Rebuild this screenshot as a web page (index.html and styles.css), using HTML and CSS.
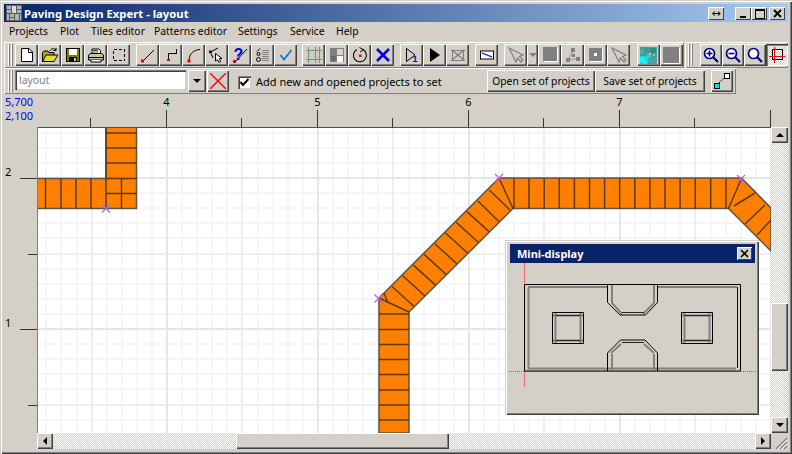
FILE: index.html
```html
<!DOCTYPE html>
<html lang="en">
<head>
<meta charset="utf-8">
<title>Paving Design Expert - layout</title>
<link rel="stylesheet" href="styles.css">
</head>
<body>
<div class="window">
  <header class="titlebar">
    <svg class="app-icon" width="16" height="16" viewBox="0 0 16 16" shape-rendering="crispEdges"><rect width="16" height="16" fill="#b4b4b4"/><path d="M.5 0V16M15.500 0V16M0 .5H16M0 15.500H16" stroke="#666" fill="none"/><path d="M5.500 0V8M10.500 0V8M0 8.500H16M0 4.500H5M11 4.500H16M8.500 8V16M3 8V16M13 8V16M3 12.500H8" stroke="#5a5a5a" fill="none"/><path d="M6 1H10V8H6Z" fill="#dcdcdc"/></svg>
    <span class="title-text">Paving Design Expert - layout</span>
    <span class="cap-btn cap-resize">↔</span>
    <span class="cap-btn cap-min"><svg width="15" height="13" viewBox="0 0 15 13" shape-rendering="crispEdges"><rect x="4" y="9" width="6" height="2"/></svg></span>
    <span class="cap-btn cap-max"><svg width="15" height="13" viewBox="0 0 15 13" shape-rendering="crispEdges"><path d="M3 2H12V11H3ZM3 3H12" fill="none" stroke="#000"/></svg></span>
    <span class="cap-btn cap-close"><svg width="15" height="13" viewBox="0 0 15 13"><path d="M4 3L11 10M11 3L4 10" stroke="#000" stroke-width="1.8"/></svg></span>
  </header>

  <nav class="menu">
    <span class="m1">Projects</span><span class="m2">Plot</span><span class="m3">Tiles editor</span><span class="m4">Patterns editor</span><span class="m5">Settings</span><span class="m6">Service</span><span>Help</span>
  </nav>

  <div class="toolrow">
    <div class="band band-main">
      <i class="grip"></i>
      <div class="group">
        <span class="tb"><svg viewBox="0 0 16 16"><path d="M2.500 1.500H10L13.500 5V14.500H2.500Z" fill="#fff" stroke="#000"/><path d="M9.500 1.500V5.500H13.500" fill="none" stroke="#000"/></svg></span>
        <span class="tb"><svg viewBox="0 0 16 16"><path d="M.5 14.500V5.500L2 4H6L7 5.500H12V14.500Z" fill="#a8a818" stroke="#000"/><path d="M.5 14.500L4 8H16L12 14.500Z" fill="#e0d840" stroke="#000"/><path d="M8 4C9 1.500 12 1 14 3M14 1V3.500H11.500" fill="none" stroke="#000"/></svg></span>
        <span class="tb"><svg viewBox="0 0 16 16" shape-rendering="crispEdges"><path d="M1.500 1.500H14.500V14.500H1.500Z" fill="#808000" stroke="#000"/><rect x="4" y="2" width="8" height="6" fill="#fff"/><rect x="4" y="10" width="8" height="4" fill="#000"/><rect x="9" y="11" width="2" height="3" fill="#c8c8c8"/></svg></span>
        <span class="tb"><svg viewBox="0 0 16 16"><path d="M4 7V2H11L12.500 3.500V7" fill="#fff" stroke="#000"/><path d="M.5 8L2.500 6.500H13.500L15.500 8V13H.5Z" fill="#c0c0c0" stroke="#000"/><path d="M1 10.500H15" stroke="#000"/><path d="M9 8.500H13" stroke="#e6d800" stroke-width="2"/><path d="M3 13V15H13V13" fill="#fff" stroke="#000"/><path d="M5 3.500H10M5 5H10" stroke="#555"/></svg></span>
        <span class="tb"><svg viewBox="0 0 16 16" shape-rendering="crispEdges"><path d="M2.500 2.500H13.500V13.500H2.500Z" fill="none" stroke="#000" stroke-dasharray="3 2"/></svg></span>
      </div>
      <div class="group g2">
        <span class="tb"><svg viewBox="0 0 16 16"><path d="M3 14L14 3" stroke="#000"/><rect x="1" y="12.500" width="3" height="3" fill="#e00"/></svg></span>
        <span class="tb"><svg viewBox="0 0 16 16" shape-rendering="crispEdges"><path d="M5.500 13V6.500H13.500V2" fill="none" stroke="#000"/><rect x="4" y="12" width="3" height="2" fill="#e00"/></svg></span>
        <span class="tb"><svg viewBox="0 0 16 16"><path d="M3 14C3 7 7 3 14 2.500" fill="none" stroke="#000"/><rect x="1.500" y="12.500" width="3" height="3" fill="#e00"/></svg></span>
        <span class="tb"><svg viewBox="0 0 16 16"><path d="M1.500 5L9 1M1.500 5L4 11" fill="none" stroke="#000"/><rect x="0" y="3.500" width="2.500" height="2.500"/><path d="M6.500 6.500V14L8.500 12.500L10 15.500L11.500 14.500L10.500 11.500H13Z" fill="#fff" stroke="#000"/></svg></span>
        <span class="tb"><svg viewBox="0 0 16 16"><path d="M3 15L15 2" stroke="#000"/><rect x="1" y="13" width="3" height="3" fill="#e00"/><text x="6.500" y="12.500" class="qm">?</text></svg></span>
        <span class="tb"><svg viewBox="0 0 16 16" fill="none" stroke="#000"><circle cx="3.500" cy="12.500" r="2"/><circle cx="3.500" cy="7" r="1.500"/><path d="M2 4.500L5 1.500"/><path d="M7 3.500H14M7 5.500H14M7 7.500H14M7 9.500H14M7 11.500H14M7 13.500H14" stroke="#808080" shape-rendering="crispEdges"/></svg></span>
        <span class="tb"><svg viewBox="0 0 16 16"><path d="M2.500 8L6 12.500L13.500 3" fill="none" stroke="#0a78d8" stroke-width="1.700"/></svg></span>
      </div>
      <div class="group g3">
        <span class="tb"><svg viewBox="0 0 16 16" shape-rendering="crispEdges" fill="none"><path d="M0 6.500H16M0 9.500H16M4.500 0V16M7.500 0V16M11.500 0V16" stroke="#b8d0b8"/><path d="M0 3.500H16M0 12.500H16M2.500 0V16M9.500 0V16M13.500 0V16" stroke="#7e8a7e"/></svg></span>
        <span class="tb"><svg viewBox="0 0 16 16" shape-rendering="crispEdges"><rect x="1" y="1" width="14" height="14" fill="#808080"/><rect x="8" y="2" width="6" height="6" fill="#d8d4cc"/><rect x="8" y="9" width="6" height="6" fill="#fff"/><rect x="2" y="9" width="5" height="5" fill="#6a6a6a"/></svg></span>
        <span class="tb"><svg viewBox="0 0 16 16"><path d="M11 2.600A6.500 6.500 0 1 1 5 2.500" fill="none" stroke="#000" stroke-width="1.100"/><path d="M7.500 .5L11.500 2.700L8 5" fill="none" stroke="#000"/><rect x="7" y="7.500" width="2.500" height="2.500" fill="#e00"/></svg></span>
        <span class="tb"><svg viewBox="0 0 16 16"><path d="M2 2L14 14M14 2L2 14" stroke="#0000e0" stroke-width="2.600"/></svg></span>
      </div>
      <div class="group g4">
        <span class="tb"><svg viewBox="0 0 16 16"><path d="M2.500 1.500V14.500L11 8Z" fill="none" stroke="#000"/><text x="11" y="15" class="one">1</text></svg></span>
        <span class="tb"><svg viewBox="0 0 16 16"><path d="M3 1V15L13 8Z"/></svg></span>
        <span class="tb"><svg viewBox="0 0 16 16" fill="none" stroke="#808080" shape-rendering="crispEdges"><path d="M1 3H15M1 13H15M2.500 3V13M13.500 3V13"/><path d="M2 3L14 13M14 3L2 13" stroke-width="1.500" shape-rendering="auto"/></svg></span>
      </div>
      <div class="group g4">
        <span class="tb"><svg viewBox="0 0 16 16"><rect x="1.500" y="4" width="13" height="8" fill="#fff" stroke="#000"/><path d="M3 6L13 10" stroke="#0000d0" stroke-width="1.200"/></svg></span>
      </div>
      <div class="group g4">
        <span class="tb"><svg viewBox="0 0 16 16"><path d="M1 1L8 15L9.500 11L13 15L15 13L11.500 9.500L15 8Z" fill="none" stroke="#808080" stroke-width="1.200"/></svg></span>
        <span class="tb tb-drop"><i class="tri-down tri-gray"></i></span>
        <span class="tb"><svg viewBox="0 0 16 16" shape-rendering="crispEdges"><rect x="2" y="1" width="14" height="14" fill="#fff"/><rect x="1" y="0" width="14" height="14" fill="#808080"/></svg></span>
        <span class="tb"><svg viewBox="0 0 16 16"><path d="M3 13L8 4M4 13L14 11" stroke="#999" stroke-width="1.100"/><rect x="6" y="1" width="4" height="4" fill="#808080"/><rect x="1" y="11" width="4" height="4" fill="#808080"/><rect x="11" y="10" width="4" height="4" fill="#808080"/><rect x="7" y="7" width="3" height="3" fill="#808080"/></svg></span>
        <span class="tb"><svg viewBox="0 0 16 16" shape-rendering="crispEdges"><rect x="2" y="2" width="13" height="13" fill="#fff"/><rect x="1" y="1" width="13" height="13" fill="#808080"/><rect x="6" y="6" width="3" height="3" fill="#fff"/></svg></span>
        <span class="tb"><svg viewBox="0 0 16 16"><path d="M1 1L8 15L9.500 11L13 15L15 13L11.500 9.500L15 8Z" fill="none" stroke="#808080" stroke-width="1.200"/></svg></span>
      </div>
      <div class="group g5">
        <span class="tb"><svg class="big" viewBox="0 0 17 17" shape-rendering="crispEdges"><rect width="17" height="17" fill="#35a5a0"/><rect y="9" width="8" height="8" fill="#1cd8e0"/><rect x="0" y="11" width="5" height="4" fill="#00ffff"/><rect x="10" y="1" width="6" height="5" fill="#2a8f88"/><rect x="7" y="7" width="4" height="4" fill="#7fb0a8"/><rect x="4" y="0" width="4" height="5" fill="#4d8f90"/><rect x="11" y="10" width="6" height="7" fill="#5a9ca0"/><rect x="8" y="12" width="3" height="3" fill="#20c0c0"/><rect x="9" y="6" width="2" height="1" fill="#e8f0f0"/><rect x="1" y="3" width="2" height="3" fill="#5fb8a8"/><rect x="13" y="7" width="2" height="2" fill="#80c0b8"/><rect x="4" y="14" width="2" height="2" fill="#70e0e8"/></svg></span>
        <span class="tb"><svg class="big" viewBox="0 0 17 17" shape-rendering="crispEdges"><rect x="1" y="1" width="16" height="16" fill="#fff"/><rect width="16" height="16" fill="#808080"/></svg></span>
      </div>
    </div>
    <div class="band band-zoom">
      <i class="grip"></i>
      <div class="group">
        <span class="tb tz"><svg viewBox="0 0 16 16"><circle cx="6.500" cy="6.500" r="5" fill="#fff" stroke="#000080" stroke-width="1.700"/><path d="M10.500 10.500L15 15" stroke="#000080" stroke-width="2.200"/><path d="M3.500 6.500H9.500M6.500 3.500V9.500" stroke="#000080" stroke-width="1.600"/></svg></span>
        <span class="tb tz"><svg viewBox="0 0 16 16"><circle cx="6.500" cy="6.500" r="5" fill="#fff" stroke="#000080" stroke-width="1.700"/><path d="M10.500 10.500L15 15" stroke="#000080" stroke-width="2.200"/><path d="M3.500 6.500H9.500" stroke="#000080" stroke-width="1.600"/></svg></span>
        <span class="tb tz"><svg viewBox="0 0 16 16"><circle cx="6.500" cy="6.500" r="5" fill="#fff" stroke="#000080" stroke-width="1.700"/><path d="M10.500 10.500L15 15" stroke="#000080" stroke-width="2.200"/></svg></span>
        <span class="tb tz tb-on"><svg viewBox="0 0 16 16" shape-rendering="crispEdges"><rect x="3.500" y="2.500" width="10" height="10" fill="none" stroke="#000"/><path d="M0 9.500H16M5.500 0V16" stroke="#f00" fill="none"/></svg></span>
      </div>
    </div>
  </div>

  <div class="band band-set">
    <i class="grip"></i>
    <span class="combo">layout</span>
    <span class="tb combo-btn"><i class="tri-down"></i></span>
    <span class="tb clear-btn"><svg viewBox="0 0 16 16"><path d="M0 0L16 16M16 0L0 16" stroke="#f00" stroke-width="1.400"/></svg></span>
    <span class="check"><svg width="11" height="11" viewBox="0 0 11 11"><path d="M1.500 5L4 8L9.500 2" fill="none" stroke="#000" stroke-width="2"/></svg></span>
    <span class="check-label">Add new and opened projects to set</span>
    <span class="tb text-btn btn-open">Open set of projects</span>
    <span class="tb text-btn btn-save">Save set of projects</span>
    <span class="tb set-icon"><svg viewBox="0 0 16 16" shape-rendering="crispEdges"><path d="M5 10L10 5" stroke="#000" stroke-dasharray="2 1" shape-rendering="auto"/><rect x="10.500" y=".5" width="5" height="5" fill="#fff" stroke="#000"/><rect x=".5" y="10.500" width="5" height="5" fill="#00e0f0" stroke="#000"/></svg></span>
  </div>

  <main class="workspace">
    <div class="coords"><span>5,700</span><span>2,100</span></div>

    <svg class="ruler-top" width="734" height="33" viewBox="37 94 734 33" shape-rendering="crispEdges">
      <path d="M90.500 118V127M241.500 118V127M392.500 118V127M543.500 118V127M694.500 118V127M166.500 110V127M317.500 110V127M468.500 110V127M619.500 110V127M770.500 110V127" stroke="#333" fill="none"/>
      <g class="rtext"><text x="166.500" y="106">4</text><text x="317.500" y="106">5</text><text x="468.500" y="106">6</text><text x="619.500" y="106">7</text></g>
    </svg>
    <div class="corner-pad"></div>

    <svg class="ruler-left" width="33" height="306" viewBox="4 127 33 306" shape-rendering="crispEdges">
      <path d="M20 178.500H37M20 329.500H37M28 254.500H37M28 405.500H37" stroke="#333" fill="none"/>
      <g class="ltext"><text x="5" y="176">2</text><text x="5" y="327">1</text></g>
    </svg>

    <div class="canvas">
      <svg class="plan" width="734" height="306" viewBox="37 127 734 306">
        <rect x="37" y="127" width="734" height="306" fill="#fff"/>
        <g shape-rendering="crispEdges" fill="none" stroke-width="2" transform="translate(1 0)">
          <path stroke="#f6f6f6" d="M45 127V433M60 127V433M76 127V433M106 127V433M121 127V433M136 127V433M151 127V433M181 127V433M196 127V433M211 127V433M226 127V433M257 127V433M272 127V433M287 127V433M302 127V433M332 127V433M347 127V433M362 127V433M377 127V433M408 127V433M423 127V433M438 127V433M453 127V433M483 127V433M498 127V433M513 127V433M528 127V433M559 127V433M574 127V433M589 127V433M604 127V433M634 127V433M649 127V433M664 127V433M679 127V433M710 127V433M725 127V433M740 127V433M755 127V433"/>
          <path stroke="#f6f6f6" d="M36 133H771M36 148H771M36 163H771M36 193H771M36 208H771M36 223H771M36 238H771M36 269H771M36 284H771M36 299H771M36 314H771M36 344H771M36 359H771M36 374H771M36 389H771M36 420H771"/>
          <path stroke="#eeeeee" d="M91 127V433M241 127V433M392 127V433M543 127V433M694 127V433M36 254H771M36 405H771"/>
          <path stroke="#e6e6e6" d="M166 127V433M317 127V433M468 127V433M619 127V433M770 127V433M36 178H771M36 329H771"/>
        </g>

        <g class="paving">
          <path d="M37 178.500H106V127H136.500V208.500H37Z"/>
          <path class="tick" d="M45.500 178.500V208.500M61 178.500V208.500M76 178.500V208.500M91 178.500V208.500M106 127V208.500M121.500 178.500V208.500M106 133H136.500M106 148H136.500M106 163H136.500M106 178.500H136.500M106 193.500H136.500"/>
          <path d="M379 433V298L499 178H741.500L771 208V251L728.500 208.500H513L409 312V433Z"/>
          <path class="tick" d="M379 298L409 312M379 314H409M379 329.500H409M379 344.500H409M379 359.500H409M379 374.500H409M379 390H409M379 405H409M379 420H409M384 293L388 303M392 286.500L414 306.500M402.700 275.800L424.700 295.800M413.400 265.100L435.400 285.100M424.100 254.400L446.100 274.400M434.800 243.700L456.800 263.700M445.500 233L467.500 253M456.200 222.300L478.200 242.300M467 211.600L489 231.600M478 201L499 221.700M489.300 190L510 210M499 178L513 208.500M514 178.500V208.500M529 178.500V208.500M544.200 178.500V208.500M559.300 178.500V208.500M574.400 178.500V208.500M589.500 178.500V208.500M604.600 178.500V208.500M619.700 178.500V208.500M634.800 178.500V208.500M649.900 178.500V208.500M665 178.500V208.500M680.100 178.500V208.500M695.200 178.500V208.500M710.700 178.500V208.500M726 178.500V208.500M741.500 178.500L728.500 208.500M734 206L755 193M745 224L765 205M757 235L771 220"/>
        </g>
        <path d="M102 204.500L110 212.500M110 204.500L102 212.500" stroke="#8a78ee" stroke-width="1.200"/>
        <path d="M495 174L503 182M503 174L495 182M737 175L745 183M745 175L737 183M374.500 294.500L382.500 302.500M382.500 294.500L374.500 302.500" stroke="#c45ee6" stroke-width="1.200"/>
        <g shape-rendering="crispEdges" fill="none">
          <path d="M37 127.500H771" stroke="#505050"/>
          <path d="M37.500 127V433" stroke="#808080"/>
        </g>
      </svg>

      <section class="mini">
        <div class="mini-title">
          <span>Mini-display</span>
          <span class="mini-close"><svg width="15" height="13" viewBox="0 0 15 13"><path d="M4 3L11 10M11 3L4 10" stroke="#000" stroke-width="1.600"/></svg></span>
        </div>
        <svg class="mini-draw" width="249" height="147" viewBox="509 264 249 147" fill="none">
          <path d="M524.500 264V388" stroke="#e87070" shape-rendering="crispEdges"/>
          <path d="M509 372.500H756" stroke="#c85050" stroke-dasharray="1 1" shape-rendering="crispEdges"/>
          <g stroke="#808080" stroke-width="2">
            <path d="M528.500 289V369.500H736M528 288H608M657 288H737"/>
            <path d="M612 286V304L622 315M654 286V304L643 315M612 355V371M654 355V371M611 354L621 345M654 354L644 345"/>
            <path d="M555.500 314V344M580.500 314V344M553 316.500H583M553 341.500H583M684.500 314V344M709.500 314V344M682 316.500H712M682 341.500H712"/>
          </g>
          <g stroke="#000">
            <path d="M524.500 285.500H740.500V372H524.500Z"/>
            <path d="M737.500 288V369" stroke="#111"/>
            <path d="M607.500 285.500V303.500L620 316H645.500L657.500 303.500V285.500"/>
            <path d="M607.500 372V354L620.500 341H645L657.500 354V372"/>
            <path d="M552.500 313.500H583.500V344.500H552.500Z"/>
            <path d="M681.500 313.500H712.500V344.500H681.500Z"/>
            <path d="M622 313.500H644M622 343.500H644M555.500 316.500H580.500M684.500 316.500H709.500M555.500 341.500H580.500M684.500 341.500H709.500" stroke="#222"/>
          </g>
        </svg>
      </section>
    </div>

    <div class="vscroll">
      <span class="sb-btn"><i class="tri-up"></i></span>
      <span class="sb-track sb-v1"></span>
      <span class="sb-thumb sb-vthumb"></span>
      <span class="sb-track"></span>
      <span class="sb-btn"><i class="tri-down"></i></span>
    </div>

    <div class="hpad"></div>
    <div class="hscroll">
      <span class="sb-btn"><i class="tri-left"></i></span>
      <span class="sb-track sb-h1"></span>
      <span class="sb-thumb sb-hthumb"></span>
      <span class="sb-track"></span>
      <span class="sb-btn"><i class="tri-right"></i></span>
    </div>
    <svg class="sizer" width="17" height="16" viewBox="0 0 17 16" shape-rendering="auto"><path d="M16 5L5 16M16 9L9 16M16 13L13 16" stroke="#808080" stroke-width="1.200"/><path d="M16 7L7 16M16 11L11 16" stroke="#fff"/></svg>
  </main>
</div>
</body>
</html>
```

FILE: styles.css
```css
* { box-sizing: border-box; }
html, body { margin: 0; padding: 0; }
body {
  width: 792px;
  height: 454px;
  overflow: hidden;
  background: #d4d0c8;
  font-family: "Noto Sans", "DejaVu Sans", sans-serif;
  font-size: 11px;
  color: #000;
}
.window {
  width: 792px;
  height: 454px;
  padding: 4px;
  background: #d4d0c8;
  box-shadow: inset 1px 1px #d4d0c8, inset 2px 2px #fff, inset -1px -1px #404040, inset -2px -2px #808080;
  display: flex;
  flex-direction: column;
}
.titlebar {
  height: 18px;
  flex: none;
  display: flex;
  align-items: center;
  padding-left: 2px;
  background: linear-gradient(90deg, #0a246a, #a6caf0);
  color: #fff;
}
.app-icon { flex: none; }
.title-text {
  margin-left: 2px;
  font-weight: 700;
  font-size: 11.300px;
  flex: 1;
  white-space: nowrap;
}
.cap-btn {
  width: 16px;
  height: 13px;
  background: #d4d0c8;
  box-shadow: inset 1px 1px #fff, inset -1px -1px #404040;
  color: #000;
  display: flex;
  align-items: center;
  justify-content: center;
  font-size: 11px;
  font-family: "DejaVu Sans", sans-serif;
  overflow: hidden;
}
.cap-min { margin-left: 11px; }
.cap-close { margin: 0 3px 0 2px; }

.menu {
  height: 20px;
  flex: none;
  display: flex;
  align-items: center;
  padding: 0 0 2px 5px;
  font-size: 10.400px;
  white-space: nowrap;
}
.m1 { width: 51px; }
.m2 { width: 31px; }
.m3 { width: 63px; }
.m4 { width: 84px; }
.m5 { width: 52px; }
.m6 { width: 46px; }

.toolrow { display: flex; height: 26px; flex: none; }
.band {
  display: flex;
  height: 26px;
  align-items: flex-start;
  box-shadow: inset 1px 1px #fff, inset -1px -1px #808080;
  padding-top: 2px;
}
.band-main { width: 680px; padding-left: 4px; }
.band-zoom { width: 103px; margin-left: 1px; padding-left: 3px; }
.band-zoom .grip { margin-right: 5px; }
.band-set { width: 732px; flex: none; padding-left: 4px; padding-right: 3px; }
.grip {
  display: block;
  width: 7px;
  height: 22px;
  flex: none;
  background: linear-gradient(90deg, #fff 0 1px, #808080 1px 2px, transparent 2px 3px, #fff 3px 4px, #808080 4px 5px, transparent 5px);
}
.group { display: flex; }
.g2 { margin-left: 6px; }
.g3 { margin-left: 5px; }
.g4 { margin-left: 6px; }
.g5 { margin-left: 7px; }
.tb {
  width: 23px;
  height: 22px;
  flex: none;
  display: flex;
  align-items: center;
  justify-content: center;
  background: #d4d0c8;
  box-shadow: inset 1px 1px #fff, inset -1px -1px #404040, inset -2px -2px #808080;
}
.tb svg { width: 16px; height: 16px; display: block; }
.tb svg.big { width: 17px; height: 17px; }
.tz { width: 22px; }
.tb-drop { width: 11px; }
.tb-on {
  background: repeating-conic-gradient(#d4d0c8 0 25%, #fff 0 50%) 0 0 / 2px 2px;
  box-shadow: inset 1px 1px #404040, inset 2px 2px #808080, inset -1px -1px #fff;
}
.qm { font: 700 16px "Liberation Sans", sans-serif; fill: #0000e0; text-anchor: middle; }
.one { font: 700 9px "Liberation Sans", sans-serif; fill: #0000e0; text-anchor: middle; }

.combo {
  width: 171px;
  height: 20px;
  flex: none;
  padding: 3px 0 0 4px;
  line-height: 14px;
  font-size: 10.400px;
  color: #808080;
  background: #fff;
  box-shadow: inset 1px 1px #808080, inset 2px 2px #404040, inset -1px -1px #d4d0c8;
}
.combo-btn { width: 18px; margin-left: 2px; }
.clear-btn { width: 22px; margin-left: 1px; }
.check {
  width: 13px;
  height: 13px;
  margin: 6px 0 0 9px;
  flex: none;
  background: #fff;
  display: flex;
  align-items: center;
  justify-content: center;
  box-shadow: inset 1px 1px #808080, inset 2px 2px #404040, inset -1px -1px #d4d0c8;
}
.check-label { margin-left: 5px; line-height: 24px; flex: 1; white-space: nowrap; }
.text-btn { font-size: 10.300px; white-space: nowrap; }
.btn-open { width: 108px; }
.btn-save { width: 110px; }
.set-icon { width: 22px; margin-left: 6px; }

.tri-down, .tri-up, .tri-left, .tri-right { display: block; width: 0; height: 0; border-style: solid; border-color: transparent; }
.tri-down { border-width: 4px 4px 0; border-top-color: #000; }
.tri-gray { border-top-color: #808080; }
.tri-up { border-width: 0 4px 4px; border-bottom-color: #000; }
.tri-left { border-width: 4px 4px 4px 0; border-right-color: #000; }
.tri-right { border-width: 4px 0 4px 4px; border-left-color: #000; }

.workspace {
  display: grid;
  grid-template-columns: 33px 734px 17px;
  grid-template-rows: 33px 306px 16px;
  flex: none;
}
.coords {
  display: flex;
  flex-direction: column;
  padding: 1px 0 0 1px;
  font-size: 11px;
  line-height: 14px;
  color: #0000f0;
}
.ruler-top, .ruler-left, .sizer { display: block; }
.rtext text { font-size: 11px; text-anchor: middle; fill: #000; }
.ltext text { font-size: 11px; fill: #000; }

.canvas { position: relative; width: 734px; height: 306px; overflow: hidden; }
.plan { display: block; }
.paving path { fill: #ff8000; stroke: #5c5246; stroke-width: 1.500; }
.paving path.tick { fill: none; stroke: #5e3a10; stroke-width: 1.500; }

.mini {
  position: absolute;
  left: 468px;
  top: 113px;
  width: 254px;
  height: 175px;
  padding: 4px 4px 0 5px;
  background: #d4d0c8;
  box-shadow: inset 1px 1px #d4d0c8, inset 2px 2px #fff, inset -1px -1px #404040, inset -2px -2px #808080;
}
.mini-title {
  height: 19px;
  display: flex;
  align-items: center;
  justify-content: space-between;
  padding: 0 3px 0 7px;
  background: #0a246a;
  color: #fff;
  font-weight: 700;
  font-size: 11px;
}
.mini-close {
  width: 15px;
  height: 13px;
  display: flex;
  background: #d4d0c8;
  box-shadow: inset 1px 1px #fff, inset -1px -1px #404040;
}
.mini-draw { display: block; margin-left: -1px; }

.vscroll { display: flex; flex-direction: column; }
.hscroll { display: flex; }
.sb-btn {
  flex: none;
  display: flex;
  align-items: center;
  justify-content: center;
  background: #d4d0c8;
  box-shadow: inset 1px 1px #fff, inset -1px -1px #404040, inset -2px -2px #808080;
}
.vscroll .sb-btn { width: 17px; height: 16px; }
.hscroll .sb-btn { width: 16px; height: 16px; }
.sb-track {
  flex: 1;
  background: repeating-conic-gradient(#d4d0c8 0 25%, #fff 0 50%) 0 0 / 2px 2px;
}
.sb-v1 { flex: none; height: 160px; }
.sb-h1 { flex: none; width: 183px; }
.sb-thumb {
  flex: none;
  background: #d4d0c8;
  box-shadow: inset 1px 1px #fff, inset -1px -1px #404040, inset -2px -2px #808080;
}
.sb-vthumb { height: 68px; }
.sb-hthumb { width: 213px; }
```
